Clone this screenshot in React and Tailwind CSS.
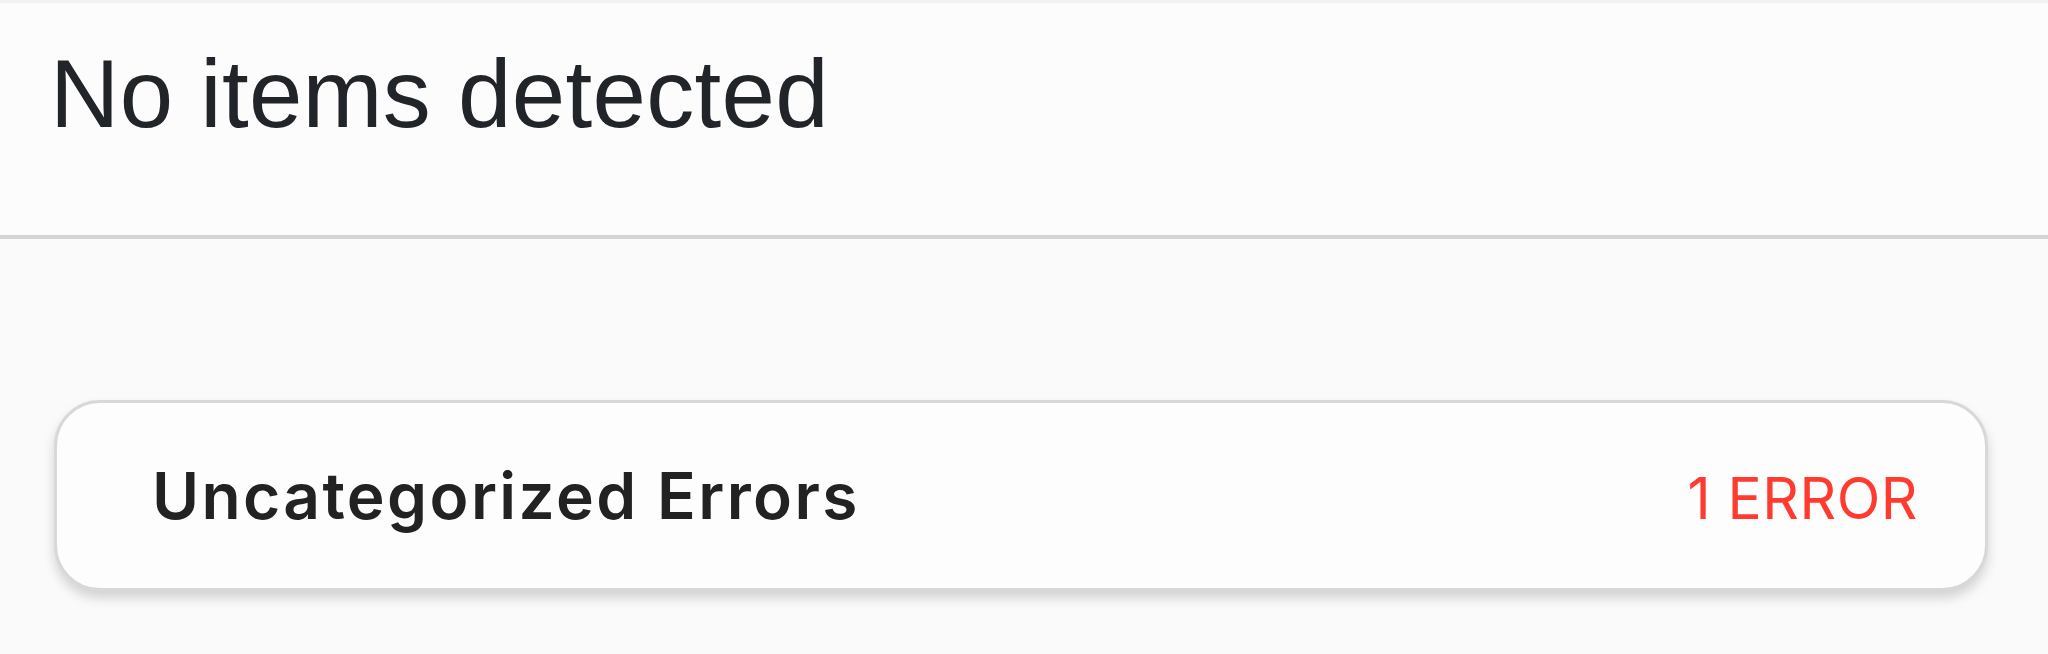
export default function App() {
  return (
    <div className="min-h-screen w-full bg-[#fafafa]">
      {/* header */}
      <div className="h-[239px] border-t-[3px] border-b-[4px] border-t-[#f1f1f1] border-b-[#d5d5d5] bg-[#fcfcfc] pl-[50px] pt-[37px]">
        <h1 className="font-['Liberation_Sans',Arial,sans-serif] text-[96px] leading-[107px] tracking-[0.3px] text-[#212428]">
          No items detected
        </h1>
      </div>

      <div className="pt-[161px]">
        <div className="ml-[54px] mr-[60px] flex h-[191px] items-center rounded-[46px] border-[3px] border-[#d8d8d8] bg-[#fdfdfd] pl-[95px] pr-[67px] shadow-[0_7px_12px_rgba(0,0,0,0.16)]">
          <div className="flex w-full items-baseline justify-between font-['Inter',sans-serif]">
            <span className="text-[64px] font-semibold tracking-[2.4px] text-[#222222]">
              Uncategorized Errors
            </span>
            <span className="text-[57px] font-normal tracking-[0.5px] text-[#ff3b30]">1 ERROR</span>
          </div>
        </div>
      </div>
    </div>
  );
}
